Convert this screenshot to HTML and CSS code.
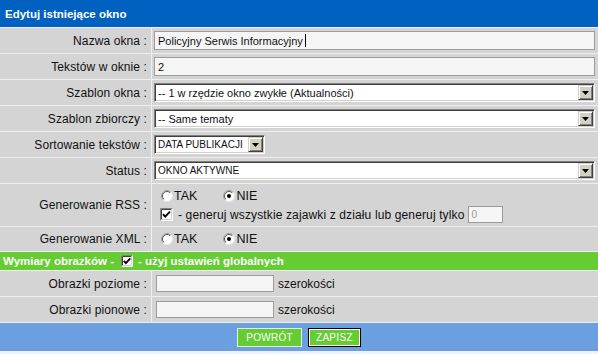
FILE: index.html
```html
<!DOCTYPE html>
<html lang="pl">
<head>
<meta charset="utf-8">
<title>Edytuj istniejące okno</title>
<link rel="stylesheet" href="styles.css">
</head>
<body>
<div class="form">
  <div class="head">Edytuj istniejące okno</div>

  <div class="row">
    <div class="lab">Nazwa okna :</div>
    <div class="val"><div class="field full">Policyjny Serwis Informacyjny<span class="caret"></span></div></div>
  </div>

  <div class="row">
    <div class="lab">Tekstów w oknie :</div>
    <div class="val"><div class="field full">2</div></div>
  </div>

  <div class="row">
    <div class="lab">Szablon okna :</div>
    <div class="val">
      <div class="select full"><span class="opt">-- 1 w rzędzie okno zwykłe (Aktualności)</span>
        <span class="arrow"><svg width="7" height="4" viewBox="0 0 7 4"><path d="M0 0H7L3.5 4Z" fill="#000"/></svg></span>
      </div>
    </div>
  </div>

  <div class="row">
    <div class="lab">Szablon zbiorczy :</div>
    <div class="val">
      <div class="select full"><span class="opt">-- Same tematy</span>
        <span class="arrow"><svg width="7" height="4" viewBox="0 0 7 4"><path d="M0 0H7L3.5 4Z" fill="#000"/></svg></span>
      </div>
    </div>
  </div>

  <div class="row">
    <div class="lab">Sortowanie tekstów :</div>
    <div class="val">
      <div class="select short"><span class="opt caps">DATA PUBLIKACJI</span>
        <span class="arrow"><svg width="7" height="4" viewBox="0 0 7 4"><path d="M0 0H7L3.5 4Z" fill="#000"/></svg></span>
      </div>
    </div>
  </div>

  <div class="row">
    <div class="lab">Status :</div>
    <div class="val">
      <div class="select full"><span class="opt caps">OKNO AKTYWNE</span>
        <span class="arrow"><svg width="7" height="4" viewBox="0 0 7 4"><path d="M0 0H7L3.5 4Z" fill="#000"/></svg></span>
      </div>
    </div>
  </div>

  <div class="row tall">
    <div class="lab">Generowanie RSS :</div>
    <div class="val stack">
      <div class="line">
        <span class="radio"><svg width="12" height="12" viewBox="0 0 12 12"><circle cx="6" cy="6" r="5.5" fill="#fff" stroke="#e8e8e8"/><path d="M2.1 9.9A5.5 5.5 0 0 1 9.9 2.1" fill="none" stroke="#9a9a9a"/><path d="M2.8 9.2A4.5 4.5 0 0 1 9.2 2.8" fill="none" stroke="#555"/></svg></span><span class="rtxt">TAK</span>
        <span class="radio gapl"><svg width="12" height="12" viewBox="0 0 12 12"><circle cx="6" cy="6" r="5.5" fill="#fff" stroke="#e8e8e8"/><path d="M2.1 9.9A5.5 5.5 0 0 1 9.9 2.1" fill="none" stroke="#9a9a9a"/><path d="M2.8 9.2A4.5 4.5 0 0 1 9.2 2.8" fill="none" stroke="#555"/><circle cx="6" cy="6" r="2" fill="#000"/></svg></span><span class="rtxt">NIE</span>
      </div>
      <div class="line">
        <span class="check"><svg width="13" height="13" viewBox="0 0 13 13"><rect x="0" y="0" width="13" height="13" fill="#fff"/><path d="M0.5 12.5V0.5H12.5" fill="none" stroke="#808080"/><path d="M1.5 11.5V1.5H11.5" fill="none" stroke="#404040"/><path d="M1.5 11.5H11.5V1.5" fill="none" stroke="#d4d0c8"/><path d="M3 6.2L5.2 8.6L10 3.6" fill="none" stroke="#000" stroke-width="1.8"/></svg></span>
        <span class="ctxt">- generuj wszystkie zajawki z działu lub generuj tylko</span>
        <div class="field mini">0</div>
      </div>
    </div>
  </div>

  <div class="row xml">
    <div class="lab">Generowanie XML :</div>
    <div class="val">
      <div class="line">
        <span class="radio"><svg width="12" height="12" viewBox="0 0 12 12"><circle cx="6" cy="6" r="5.5" fill="#fff" stroke="#e8e8e8"/><path d="M2.1 9.9A5.5 5.5 0 0 1 9.9 2.1" fill="none" stroke="#9a9a9a"/><path d="M2.8 9.2A4.5 4.5 0 0 1 9.2 2.8" fill="none" stroke="#555"/></svg></span><span class="rtxt">TAK</span>
        <span class="radio gapl"><svg width="12" height="12" viewBox="0 0 12 12"><circle cx="6" cy="6" r="5.5" fill="#fff" stroke="#e8e8e8"/><path d="M2.1 9.9A5.5 5.5 0 0 1 9.9 2.1" fill="none" stroke="#9a9a9a"/><path d="M2.8 9.2A4.5 4.5 0 0 1 9.2 2.8" fill="none" stroke="#555"/><circle cx="6" cy="6" r="2" fill="#000"/></svg></span><span class="rtxt">NIE</span>
      </div>
    </div>
  </div>

  <div class="green">
    <span>Wymiary obrazków -</span>
    <span class="check gcheck"><svg width="12" height="12" viewBox="0 0 12 12"><rect x="0" y="0" width="12" height="12" fill="#fff"/><path d="M0.5 11.5V0.5H11.5" fill="none" stroke="#808080"/><path d="M1.5 10.5V1.5H10.5" fill="none" stroke="#404040"/><path d="M1.5 10.5H10.5V1.5" fill="none" stroke="#d4d0c8"/><path d="M2.8 5.8L4.9 8.1L9.3 3.3" fill="none" stroke="#000" stroke-width="1.8"/></svg></span>
    <span>- użyj ustawień globalnych</span>
  </div>

  <div class="row">
    <div class="lab">Obrazki poziome :</div>
    <div class="val"><div class="field dim"></div><span class="unit">szerokości</span></div>
  </div>

  <div class="row">
    <div class="lab">Obrazki pionowe :</div>
    <div class="val"><div class="field dim"></div><span class="unit">szerokości</span></div>
  </div>

  <div class="foot">
    <button class="btn" type="button">POWRÓT</button>
    <button class="btn focus" type="button">ZAPISZ</button>
  </div>
</div>
</body>
</html>
```

FILE: styles.css
```css
html, body {
  margin: 0;
  padding: 0;
}
body {
  background: #eef3f9;
  font-family: "Liberation Sans", Arial, sans-serif;
  color: #111;
}
.form {
  width: 598px;
  display: flex;
  flex-direction: column;
  gap: 1px;
  background: #efefef;
}
.head {
  height: 27px;
  background: #0061c1;
  color: #fff;
  font-weight: bold;
  font-size: 11.5px;
  display: flex;
  align-items: center;
  padding-left: 5px;
}
.row {
  display: grid;
  grid-template-columns: 151px 1fr;
  column-gap: 1px;
  height: 25px;
}
.row.tall { height: 42px; }
.row.xml { height: 24px; }
.lab, .val {
  background: #d4d4d4;
  display: flex;
  align-items: center;
}
.lab {
  justify-content: flex-end;
  padding-right: 4px;
  font-size: 12px;
  letter-spacing: 0.1px;
  white-space: nowrap;
}
.val {
  padding: 0 3px 0 2px;
  font-size: 12px;
}
.val.stack {
  flex-direction: column;
  align-items: stretch;
  justify-content: center;
  gap: 1px;
}
.line {
  display: flex;
  align-items: center;
  height: 18px;
}
.field {
  box-sizing: border-box;
  height: 19px;
  border: 1px solid #9c9c9c;
  background: #f5f5f5;
  font-size: 11px;
  padding: 0 3px;
  display: flex;
  align-items: center;
  white-space: nowrap;
}
.full { width: 441px; }
.caret {
  display: inline-block;
  width: 1px;
  height: 13px;
  background: #000;
  margin-left: 2px;
}
.field.mini {
  width: 35px;
  height: 17px;
  margin-left: 4px;
  color: #9a9a9a;
  font-size: 10px;
  padding: 0 2px;
}
.field.dim {
  width: 118px;
  height: 17px;
  margin-left: 2px;
}
.unit {
  margin-left: 4px;
}
.select {
  box-sizing: border-box;
  height: 19px;
  background: #fff;
  border-top: 1px solid #808080;
  border-left: 1px solid #808080;
  border-bottom: 1px solid #fff;
  border-right: 1px solid #fff;
  box-shadow: inset 1px 1px 0 #404040, inset -1px -1px 0 #d4d0c8;
  display: flex;
  align-items: center;
  padding: 0 1px 0 3px;
  font-size: 11px;
  white-space: nowrap;
}
.select.short { width: 111px; }
.opt {
  flex: 1;
  overflow: hidden;
}
.caps { font-size: 10px; }
.arrow {
  box-sizing: border-box;
  width: 15px;
  height: 15px;
  background: #d4d0c8;
  border-top: 1px solid #d4d0c8;
  border-left: 1px solid #d4d0c8;
  border-bottom: 1px solid #404040;
  border-right: 1px solid #404040;
  box-shadow: inset 1px 1px 0 #fff, inset -1px -1px 0 #808080;
  display: flex;
  align-items: center;
  justify-content: center;
}
.arrow svg { display: block; }
.radio {
  display: inline-flex;
  margin-left: 7px;
}
.radio.gapl { margin-left: 26px; }
.radio svg, .check svg { display: block; }
.rtxt {
  margin-left: 1px;
  font-size: 12.5px;
}
.check {
  display: inline-flex;
  margin-left: 6px;
  margin-right: 5px;
}
.ctxt {
  letter-spacing: 0.13px;
}
.green {
  height: 18px;
  background: #66cc33;
  color: #fff;
  font-weight: bold;
  font-size: 11.5px;
  display: flex;
  align-items: center;
  padding-left: 3px;
  white-space: nowrap;
}
.gcheck {
  margin-left: 7px;
  margin-right: 5px;
}
.foot {
  height: 28px;
  background: #6c9fdf;
  display: flex;
  align-items: center;
  justify-content: center;
  gap: 6px;
}
.btn {
  box-sizing: border-box;
  height: 19px;
  background: #66cc33;
  color: #fff;
  border: 1px solid #e8f5df;
  font-family: "Liberation Sans", Arial, sans-serif;
  font-size: 10px;
  letter-spacing: 0.3px;
  padding: 0 8px;
  margin: 0;
}
.btn.focus {
  border: 1px solid #000;
  box-shadow: inset 0 0 0 1px #fff;
  padding: 0 7px;
}
```
